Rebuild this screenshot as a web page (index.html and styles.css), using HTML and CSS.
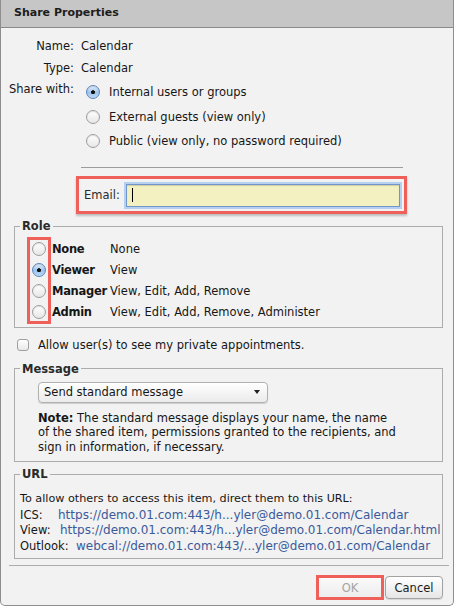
FILE: index.html
```html
<!DOCTYPE html>
<html>
<head>
<meta charset="utf-8">
<link rel="stylesheet" href="styles.css">
</head>
<body>
<div class="dialog">
  <div class="titlebar">Share Properties</div>
  <div class="info">
    <div class="lbl">Name:</div><div class="val">Calendar</div>
    <div class="lbl">Type:</div><div class="val">Calendar</div>
    <div class="lbl lbl-top">Share with:</div>
    <div class="radios">
      <div class="opt"><span class="radio on"></span>Internal users or groups</div>
      <div class="opt"><span class="radio"></span>External guests (view only)</div>
      <div class="opt"><span class="radio"></span>Public (view only, no password required)</div>
    </div>
  </div>
  <div class="sep"></div>
  <div class="email-hl">
    <span class="email-lbl">Email:</span>
    <div class="input"><span class="caret"></span></div>
  </div>
  <fieldset class="group role">
    <legend>Role</legend>
    <div class="role-rows">
      <span class="radio"></span><b>None</b><span>None</span>
      <span class="radio on"></span><b>Viewer</b><span>View</span>
      <span class="radio"></span><b>Manager</b><span>View, Edit, Add, Remove</span>
      <span class="radio"></span><b>Admin</b><span>View, Edit, Add, Remove, Administer</span>
      <div class="role-hl"></div>
    </div>
  </fieldset>
  <div class="check-row"><span class="checkbox"></span>Allow user(s) to see my private appointments.</div>
  <fieldset class="group message">
    <legend>Message</legend>
    <div class="select"><span>Send standard message</span><span class="arrow"></span></div>
    <div class="note"><b>Note:</b> The standard message displays your name, the name<br>of the shared item, permissions granted to the recipients, and<br>sign in information, if necessary.</div>
  </fieldset>
  <fieldset class="group url">
    <legend>URL</legend>
    <div class="url-body">
      <div class="url-intro">To allow others to access this item, direct them to this URL:</div>
      <div><span class="u-lbl u-ics">ICS:</span><span class="link">https://demo.01.com:443/h...yler@demo.01.com/Calendar</span></div>
      <div><span class="u-lbl u-view">View:</span><span class="link">https://demo.01.com:443/h...yler@demo.01.com/Calendar.html</span></div>
      <div><span class="u-lbl u-out">Outlook:</span><span class="link">webcal://demo.01.com:443/...yler@demo.01.com/Calendar</span></div>
    </div>
  </fieldset>
  <div class="footsep"></div>
  <div class="buttons">
    <div class="ok-hl"><div class="btn ok">OK</div></div>
    <div class="btn cancel">Cancel</div>
  </div>
</div>
</body>
</html>
```

FILE: styles.css
```css
* { box-sizing: border-box; }
html, body { margin: 0; padding: 0; background: #fff; }
body {
  width: 457px;
  height: 607px;
  overflow: hidden;
  font-family: "DejaVu Sans", "Verdana", sans-serif;
  font-size: 11.5px;
  color: #161616;
}
.dialog {
  width: 454px;
  height: 606px;
  background: #f2f2f2;
  border: 1px solid #8e8e8e;
  border-top: none;
  border-radius: 0 0 5px 5px;
  overflow: hidden;
}
.titlebar {
  height: 28px;
  background: #c6c6c6;
  border-bottom: 1px solid #8a8a8a;
  padding-left: 13px;
  line-height: 26px;
  font-weight: bold;
  font-size: 11px;
  color: #1c1c1c;
}
.info {
  display: grid;
  grid-template-columns: 73px 1fr;
  column-gap: 7px;
  row-gap: 2px;
  padding-top: 8px;
}
.lbl { text-align: right; line-height: 20px; }
.val { line-height: 20px; }
.lbl-top { line-height: 18px; }
.radios { display: flex; flex-direction: column; }
.opt { display: flex; align-items: center; height: 24.5px; }
.opt .radio { margin-left: 5px; margin-right: 9px; }
.radio {
  display: inline-block;
  width: 14px;
  height: 14px;
  border-radius: 50%;
  border: 1px solid #9e9e9e;
  background: linear-gradient(#ffffff, #e6e6e6);
  box-shadow: inset 0 1px 1px rgba(0,0,0,0.12);
  flex: none;
}
.radio.on {
  border-color: #5f86bd;
  background:
    radial-gradient(circle at 50% 52%, #111 0 1.7px, transparent 2.3px),
    linear-gradient(#e6f0fb, #9cc4ee 55%, #bcd8f4);
}
.sep {
  margin: 13.5px 0 0 80px;
  width: 322px;
  border-top: 1px solid #9c9c9c;
}
.email-hl {
  margin: 8px 0 0 75px;
  width: 331px;
  height: 38px;
  border: 3px solid #f0605a;
  box-shadow: 0 2px 2px rgba(0,0,0,0.22);
  display: flex;
  align-items: center;
  padding: 0 4px 0 5px;
  gap: 6px;
}
.email-lbl { color: #2a2a2a; }
.input {
  flex: 1;
  height: 23px;
  background: #f3f1c2;
  border: 1px solid #6f97cc;
  box-shadow: 0 0 0 2px #b7d0ef, inset 0 1px 1px rgba(0,0,0,0.15);
  display: flex;
  align-items: center;
}
.caret {
  display: block;
  width: 1px;
  height: 14px;
  background: #000;
  margin-left: 5px;
}
.group {
  margin: 0 0 0 13px;
  width: 429px;
  border: 1px solid #acacac;
  padding: 0;
  min-width: 0;
}
.group legend {
  margin-left: 5px;
  padding: 0 2px;
  font-weight: bold;
  line-height: 16px;
  color: #2a2a2a;
}
.role { margin-top: 4px; }
.role-rows {
  position: relative;
  display: grid;
  grid-template-columns: 14px 52px 1fr;
  column-gap: 6px;
  grid-auto-rows: 21px;
  align-items: center;
  padding: 4.5px 0 4px 17px;
}
.role-rows b { white-space: nowrap; letter-spacing: -0.3px; }
.role-hl {
  position: absolute;
  left: 12px;
  top: 3px;
  width: 24px;
  height: 87px;
  border: 3px solid #f0605a;
}
.check-row {
  display: flex;
  align-items: center;
  height: 20px;
  margin-top: 7px;
  padding-left: 16px;
}
.checkbox {
  width: 12px;
  height: 12px;
  border: 1px solid #a0a0a0;
  border-radius: 3px;
  background: linear-gradient(#ffffff, #e8e8e8);
  margin-right: 9px;
}
.message { margin-top: 6px; padding: 0 0 7px 0; }
.select {
  margin: 5px 0 0 23px;
  width: 230px;
  height: 21px;
  border: 1px solid #b0b0b0;
  border-radius: 4px;
  background: linear-gradient(#ffffff, #ebebeb);
  box-shadow: 0 1px 1px rgba(0,0,0,0.15);
  display: flex;
  align-items: center;
  justify-content: space-between;
  padding: 0 7px 0 5px;
}
.arrow {
  width: 0;
  height: 0;
  border-left: 3.5px solid transparent;
  border-right: 3.5px solid transparent;
  border-top: 4px solid #222;
}
.note { margin: 8px 0 0 23px; line-height: 14.5px; }
.url { margin-top: 4px; }
.url-body { padding: 8.5px 0 4px 5px; line-height: 15.5px; white-space: nowrap; }
.url-intro { font-size: 11.2px; margin-bottom: 1.5px; }
.u-lbl { display: inline-block; }
.u-ics { width: 38px; }
.u-view { width: 40px; }
.u-out { width: 56px; }
.link { color: #3b5a9a; font-size: 12px; }
.footsep {
  margin: 6px 0 0 8px;
  width: 440px;
  border-top: 1px solid #acacac;
}
.buttons {
  width: 442px;
  margin-top: 9px;
  display: flex;
  justify-content: flex-end;
  align-items: center;
  gap: 1px;
}
.ok-hl {
  width: 68px;
  height: 25px;
  border: 3px solid #f0605a;
}
.btn {
  display: flex;
  align-items: center;
  justify-content: center;
}
.ok {
  height: 100%;
  background: linear-gradient(#fafafa, #ededed);
  color: #a4a4a4;
}
.cancel {
  width: 58px;
  height: 23px;
  border: 1px solid #a2a2a2;
  border-radius: 4px;
  background: linear-gradient(#ffffff, #e6e6e6);
  box-shadow: 0 1px 1px rgba(0,0,0,0.12);
  color: #1a1a1a;
}
```
